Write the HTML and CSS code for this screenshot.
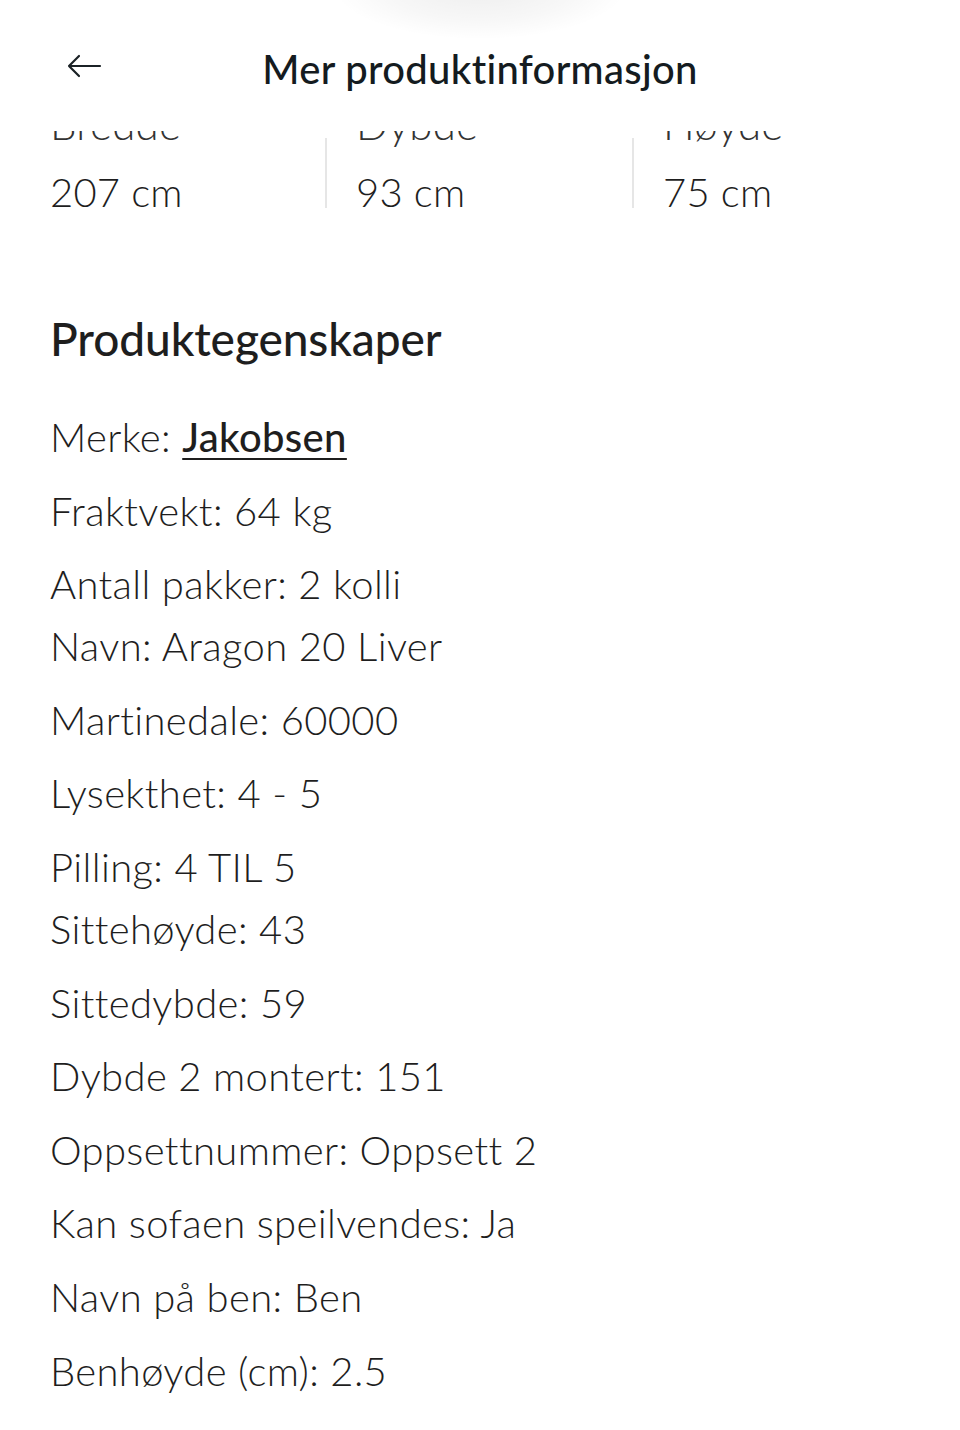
FILE: index.html
```html
<!DOCTYPE html>
<html lang="no">
<head>
<meta charset="utf-8">
<title>Mer produktinformasjon</title>
<link rel="stylesheet" href="styles.css">
</head>
<body>
<div class="page">
  <header class="topbar">
    <button class="back" aria-label="Tilbake">
      <svg width="36" height="28" viewBox="0 0 36 28" fill="none" stroke="#1b2226" stroke-width="2.2" stroke-linecap="round" stroke-linejoin="round"><path d="M34 14H3M13 4L3 14l10 10"/></svg>
    </button>
    <h1 class="title">Mer produktinformasjon</h1>
  </header>
  <section class="dims">
    <div class="dim"><div class="dim-label">Bredde</div><div class="dim-value">207 cm</div></div>
    <div class="divider"></div>
    <div class="dim"><div class="dim-label">Dybde</div><div class="dim-value">93 cm</div></div>
    <div class="divider"></div>
    <div class="dim"><div class="dim-label">Høyde</div><div class="dim-value">75 cm</div></div>
  </section>
  <section class="props">
    <h2 class="props-title">Produktegenskaper</h2>
    <ul class="list">
      <li>Merke: <a href="#" class="brand">Jakobsen</a></li>
      <li>Fraktvekt: 64 kg</li>
      <li class="tight">Antall pakker: 2 kolli</li>
      <li>Navn: Aragon 20 Liver</li>
      <li>Martinedale: 60000</li>
      <li>Lysekthet: 4 - 5</li>
      <li class="tight">Pilling: 4 TIL 5</li>
      <li>Sittehøyde: 43</li>
      <li>Sittedybde: 59</li>
      <li>Dybde 2 montert: 151</li>
      <li>Oppsettnummer: Oppsett 2</li>
      <li>Kan sofaen speilvendes: Ja</li>
      <li>Navn på ben: Ben</li>
      <li>Benhøyde (cm): 2.5</li>
      <li>Farge på ben: Svart</li>
    </ul>
  </section>
</div>
</body>
</html>
```

FILE: styles.css
```css
* { box-sizing: border-box; }
html, body { margin: 0; padding: 0; background: #fff; }
body {
  font-family: Lato, "Open Sans", "Liberation Sans", sans-serif;
  color: #1e1e1e;
  overflow: hidden;
  height: 1430px;
}
.page { position: relative; width: 960px; }
.topbar {
  position: relative;
  z-index: 2;
  height: 131px;
  background: #fff;
  display: flex;
  align-items: center;
  justify-content: center;
  padding-top: 6px;
}
.topbar::before {
  content: "";
  position: absolute;
  left: 330px;
  top: -70px;
  width: 300px;
  height: 110px;
  border-radius: 50%;
  background: radial-gradient(ellipse at center, rgba(0,0,0,0.07) 0%, rgba(0,0,0,0.03) 45%, rgba(0,0,0,0) 70%);
}
.back {
  position: absolute;
  left: 66px;
  top: 52px;
  border: 0;
  background: none;
  padding: 0;
  width: 36px;
  height: 28px;
}
.title {
  margin: 0;
  font-family: Lato, sans-serif;
  font-weight: 500;
  font-size: 40px;
  letter-spacing: 0.3px;
  color: #141b20;
}
.dims {
  display: grid;
  grid-template-columns: 275px 2px 305px 2px 1fr;
  padding-left: 50px;
  margin-top: -27px;
  position: relative;
  z-index: 1;
}
.dim { display: flex; flex-direction: column; gap: 28px; }
.dim + .divider + .dim { padding-left: 29px; }
.divider {
  align-self: end;
  height: 70px;
  margin-bottom: 4px;
  background: #e6e6e6;
}
.dim-label, .dim-value { font-size: 40px; font-weight: 300; line-height: 40px; letter-spacing: 0.2px; }
.dim-label { color: #333; font-size: 42px; }
.props { padding: 99px 50px 0; }
.props-title {
  margin: 0 0 39px;
  font-size: 46px;
  font-weight: 500;
  letter-spacing: -0.1px;
  line-height: 56px;
  color: #1e1e1e;
}
.list { list-style: none; margin: 0; padding: 0; }
.list li {
  font-size: 40px;
  font-weight: 300;
  line-height: 62px;
  margin-bottom: 11.6px;
  letter-spacing: 0.35px;
  white-space: nowrap;
}
.list li.tight { margin-bottom: 0; }
.brand { color: #1e1e1e; font-weight: 500; text-decoration: underline; text-decoration-thickness: 2px; text-underline-offset: 6px; }
```
